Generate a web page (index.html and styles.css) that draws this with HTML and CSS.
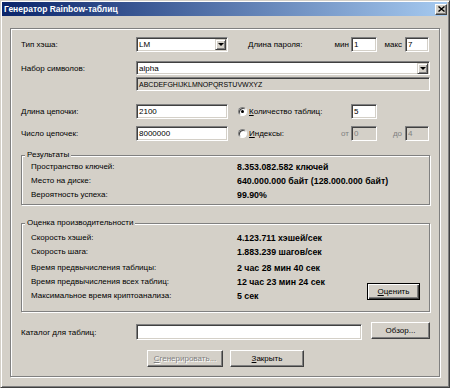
FILE: index.html
```html
<!DOCTYPE html>
<html lang="ru">
<head>
    <meta charset="UTF-8">
    <title>Генератор Rainbow-таблиц</title>
    <link rel="stylesheet" href="styles.css">
</head>
<body>

<div class="window">
    <div class="titlebar">
        <span class="title">Генератор Rainbow-таблиц</span>
        <span class="close">
            <svg width="7" height="6" viewBox="0 0 7 6"><path d="M0.5 0.5l6 5M6.5 0.5l-6 5" stroke="#000" stroke-width="1.4" fill="none"/></svg>
        </span>
    </div>

    <div class="frame">
        <!-- тип хэша и длина пароля -->
        <div class="row">
            <span class="label">Тип хэша:</span>
            <div class="field combo combo-short"><span>LM</span><span class="combo-btn"><i class="arrow"></i></span></div>
            <span class="pwd-label">Длина пароля:</span>
            <div class="range">
                <span class="mini-label">мин</span>
                <div class="field box-a">1</div>
                <span class="mini-label second">макс</span>
                <div class="field box-b">7</div>
            </div>
        </div>

        <!-- набор символов -->
        <div class="row row-charset">
            <span class="label">Набор символов:</span>
            <div class="field combo combo-wide"><span>alpha</span><span class="combo-btn"><i class="arrow"></i></span></div>
        </div>
        <div class="row row-chars">
            <span class="label"></span>
            <div class="field readonly chars">ABCDEFGHIJKLMNOPQRSTUVWXYZ</div>
        </div>

        <!-- параметры цепочек -->
        <div class="row row-chain">
            <span class="label">Длина цепочки:</span>
            <div class="field field-mid">2100</div>
            <label class="radio-wrap"><span class="radio checked"></span><span><u>К</u>оличество таблиц:</span></label>
            <div class="range">
                <span class="mini-label"></span>
                <div class="field box-a">5</div>
            </div>
        </div>
        <div class="row row-count">
            <span class="label">Число цепочек:</span>
            <div class="field field-mid">8000000</div>
            <label class="radio-wrap"><span class="radio"></span><span><u>И</u>ндексы:</span></label>
            <div class="range">
                <span class="mini-label dim">от</span>
                <div class="field box-a disabled">0</div>
                <span class="mini-label second dim">до</span>
                <div class="field box-b disabled">4</div>
            </div>
        </div>

        <!-- результаты -->
        <fieldset class="group group-results">
            <legend>Результаты</legend>
            <div class="stats">
                <span>Пространство ключей:</span>
                <span class="value">8.353.082.582 ключей</span>
                <span>Место на диске:</span>
                <span class="value">640.000.000 байт (128.000.000 байт)</span>
                <span>Вероятность успеха:</span>
                <span class="value">99.90%</span>
            </div>
        </fieldset>

        <!-- оценка производительности -->
        <fieldset class="group group-perf">
            <legend>Оценка производительности</legend>
            <div class="stats stats-perf">
                <span class="name">Скорость хэшей:</span>
                <span class="value">4.123.711 хэшей/сек</span>
                <span class="name">Скорость шага:</span>
                <span class="value">1.883.239 шагов/сек</span>
                <span class="name">Время предвычисления таблицы:</span>
                <span class="value">2 час 28 мин 40 сек</span>
                <span class="name">Время предвычисления всех таблиц:</span>
                <span class="value">12 час 23 мин 24 сек</span>
                <span class="name">Максимальное время криптоанализа:</span>
                <span class="value">5 сек</span>
                <button class="btn btn-default btn-eval"><span><u>О</u>ценить</span></button>
            </div>
        </fieldset>

        <!-- каталог -->
        <div class="row-catalog">
            <span class="label">Каталог для таблиц:</span>
            <div class="field catalog"></div>
            <button class="btn btn-browse">Обзор...</button>
        </div>

        <div class="actions">
            <button class="btn btn-generate" disabled><span><u>С</u>генерировать...</span></button>
            <button class="btn btn-close"><span><u>З</u>акрыть</span></button>
        </div>
    </div>
</div>

</body>
</html>
```

FILE: styles.css
```css
/* общие настройки */
body {
    margin: 0;
    background-color: #d4d0c8;
    font-family: "Liberation Sans", Arial, sans-serif;
    font-size: 8px;
    color: #000;
}

.window {
    width: 450px;
    height: 388px;
    box-sizing: border-box;
    border: 1px solid;
    border-color: #d4d0c8 #404040 #404040 #d4d0c8;
    box-shadow: inset 1px 1px 0 #fff, inset -1px -1px 0 #808080;
    padding: 1px 2px 2px 1px;
}

/* заголовок окна */
.titlebar {
    height: 14px;
    display: flex;
    align-items: center;
    padding-left: 2px;
    background: linear-gradient(to right, #0a246a, #a6caf0);
    color: #fff;
    font-weight: bold;
    font-size: 8.5px;
}

.close {
    margin-left: auto;
    width: 12px;
    height: 11px;
    box-sizing: border-box;
    display: flex;
    align-items: center;
    justify-content: center;
    background-color: #d4d0c8;
    border: 1px solid;
    border-color: #fff #404040 #404040 #fff;
    box-shadow: inset -1px -1px 0 #808080;
}

/* рамка с элементами */
.frame {
    margin: 12px 7px 0 8px;
    padding: 8px 9px 9px 10px;
    border: 1px solid #808080;
    box-shadow: inset 1px 1px 0 #fff, 1px 1px 0 #fff;
}

.row {
    display: flex;
    align-items: center;
    height: 15px;
}

.row-charset {
    margin-top: 9px;
    height: 14px;
}

.row-chars {
    margin-top: 2px;
    height: 14px;
}

.row-chain {
    margin-top: 13px;
}

.row-count {
    margin-top: 7px;
}

.label {
    width: 115px;
    flex-shrink: 0;
}

.field {
    box-sizing: border-box;
    height: 15px;
    display: flex;
    align-items: center;
    padding: 0 2px;
    background-color: #fff;
    border: 1px solid;
    border-color: #808080 #fff #fff #808080;
    box-shadow: inset 1px 1px 0 #404040, inset -1px -1px 0 #d4d0c8;
    white-space: nowrap;
    overflow: hidden;
}

.row-charset .field,
.row-chars .field {
    height: 14px;
}

.readonly {
    background-color: #d4d0c8;
}

.chars {
    flex: 1;
    font-size: 7px;
}

.disabled {
    background-color: #d4d0c8;
    color: #808080;
}

.combo {
    padding-right: 1px;
}

.combo-short {
    width: 92px;
}

.combo-wide {
    flex: 1;
}

.combo-btn {
    margin-left: auto;
    width: 11px;
    height: 11px;
    box-sizing: border-box;
    display: flex;
    align-items: center;
    justify-content: center;
    background-color: #d4d0c8;
    border: 1px solid;
    border-color: #d4d0c8 #404040 #404040 #d4d0c8;
    box-shadow: inset 1px 1px 0 #fff, inset -1px -1px 0 #808080;
}

.arrow {
    width: 0;
    height: 0;
    border-left: 3px solid transparent;
    border-right: 3px solid transparent;
    border-top: 3px solid #000;
}

.field-mid {
    width: 92px;
}

.pwd-label {
    flex: 1;
    margin-left: 20px;
}

.range {
    width: 101px;
    display: flex;
    align-items: center;
    flex-shrink: 0;
}

.mini-label {
    width: 20px;
    margin-right: 2px;
    text-align: right;
}

.mini-label.second {
    width: 25px;
    margin-right: 3px;
}

.dim {
    color: #808080;
}

.box-a {
    width: 26px;
}

.box-b {
    width: 24px;
}

/* переключатели */
.radio-wrap {
    flex: 1;
    display: flex;
    align-items: center;
    margin-left: 10px;
}

.radio {
    width: 9px;
    height: 9px;
    box-sizing: border-box;
    margin-right: 2px;
    border-radius: 50%;
    background-color: #fff;
    border: 1px solid;
    border-color: #808080 #fff #fff #808080;
    box-shadow: inset 1px 1px 0 #404040;
    display: flex;
    align-items: center;
    justify-content: center;
}

.radio.checked::after {
    content: "";
    width: 3px;
    height: 3px;
    border-radius: 50%;
    background-color: #000;
}

/* группы */
.group {
    margin: 9px 0 0;
    padding: 0 9px 2px 3px;
    min-width: 0;
    border: 1px solid #808080;
    box-shadow: inset 1px 1px 0 #fff, 1px 1px 0 #fff;
}

.group legend {
    padding: 0 2px;
    line-height: 10px;
    background-color: #d4d0c8;
}

.group-perf {
    margin-top: 13px;
    padding-top: 3px;
    padding-bottom: 8px;
}

.stats {
    display: grid;
    grid-template-columns: 206px 1fr;
    grid-auto-rows: 14px;
    padding-left: 6px;
    line-height: 14px;
}

.stats-perf {
    grid-template-columns: 206px 1fr auto;
    grid-template-rows: 14px 16px 14px 14px 14px;
}

.stats-perf .name {
    grid-column: 1;
}

.stats-perf .value {
    grid-column: 2;
}

.value {
    font-weight: bold;
    font-size: 8.8px;
    white-space: nowrap;
}

/* кнопки */
.btn {
    box-sizing: border-box;
    height: 17px;
    padding: 0;
    display: flex;
    align-items: center;
    justify-content: center;
    font: inherit;
    color: #000;
    background-color: #d4d0c8;
    border: 1px solid;
    border-color: #fff #404040 #404040 #fff;
    box-shadow: inset -1px -1px 0 #808080;
}

.btn-default {
    border-color: #000;
    box-shadow: inset 1px 1px 0 #fff, inset -1px -1px 0 #404040, inset -2px -2px 0 #808080;
}

.btn-eval {
    grid-column: 3;
    grid-row: 4 / 6;
    align-self: end;
    width: 53px;
    margin-bottom: 3px;
    line-height: normal;
}

.btn-generate {
    width: 76px;
    color: #808080;
    text-shadow: 1px 1px 0 #fff;
}

.btn-close {
    width: 74px;
}

.row-catalog {
    display: flex;
    align-items: center;
    height: 18px;
    margin-top: 10px;
}

.row-catalog .label {
    margin-top: 3px;
}

.catalog {
    width: 226px;
    height: 16px;
    align-self: flex-end;
}

.btn-browse {
    width: 59px;
    margin-left: 9px;
    align-self: flex-start;
}

.actions {
    display: flex;
    justify-content: center;
    gap: 7px;
    margin-top: 10px;
}
```
